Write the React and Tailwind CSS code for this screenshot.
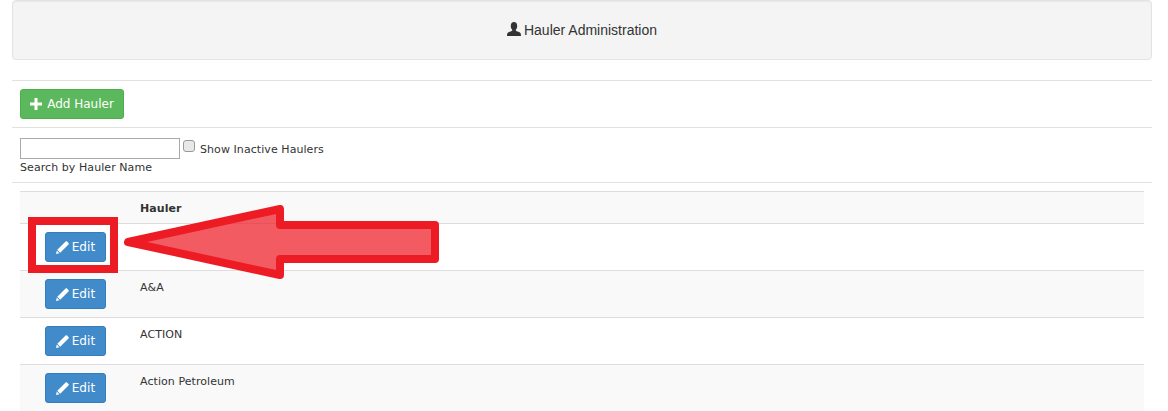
const verdana = "font-['DejaVu_Sans',Verdana,sans-serif]";

const UserIcon = () => (
  <svg viewBox="0 0 14 14" className="w-[14px] h-[14px] -translate-y-[1px] fill-[#333]">
    <path d="M3.800 4C3.800 1.500 5 0 7 0s3.200 1.500 3.200 4c0 1.600-.6 3-1.400 3.800v1c.6.500 2.200.800 3.700 1.500.9.500 1.500 1.200 1.500 3.700H0c0-2.500.6-3.200 1.500-3.700C3 9.600 4.600 9.300 5.200 8.800v-1C4.400 7 3.800 5.600 3.800 4z" />
  </svg>
);

const PlusIcon = () => (
  <svg viewBox="0 0 12 12" className="w-3 h-3 fill-white">
    <path d="M4.500 0h3v4.500H12v3H7.500V12h-3V7.500H0v-3h4.500z" />
  </svg>
);

const PencilIcon = () => (
  <svg viewBox="0 0 13 13" className="w-[13px] h-[13px] fill-white">
    <path d="M9.600.5c.4-.4 1-.4 1.400 0l1.500 1.500c.4.400.4 1 0 1.400L4.200 11.700 1.300 8.800zM.8 9.600l2.600 2.600L0 13z" />
  </svg>
);

const EditButton = () => (
  <button className="w-[61px] h-[30px] flex items-center justify-center gap-[3px] tracking-[0.1px] rounded-[3px] bg-[#428bca] border border-[#357ebd] text-white text-[12px]">
    <PencilIcon />
    Edit
  </button>
);

const Rule = () => <hr className="border-0 border-t border-[#e2e2e2]" />;

const rows = ["", "A&A", "ACTION", "Action Petroleum"];

export default function App() {
  return (
    <div className={`relative h-[411px] overflow-hidden bg-white px-3 pr-4 text-[#333] text-[11px] tracking-[0.07px] ${verdana}`}>
      <div className="h-[60px] flex items-center justify-center gap-[3px] tracking-normal rounded border border-[#e3e3e3] bg-[#f4f4f4] shadow-[inset_0_1px_1px_rgba(0,0,0,0.05)] text-[14px] font-['Liberation_Sans',Arial,sans-serif]">
        <UserIcon />
        Hauler Administration
      </div>

      <div className="mt-5">
        <Rule />
      </div>
      <div className="h-[46px] flex items-center pl-2">
        <button className="w-[104px] h-[30px] flex items-center justify-center gap-[5px] tracking-normal rounded-[3px] bg-[#5cb85c] border border-[#4cae4c] text-white text-[12px] font-medium">
          <PlusIcon />
          Add Hauler
        </button>
      </div>
      <Rule />

      <div className="h-[54px] pl-2 pt-[10px]">
        <div className="flex items-start h-[21px]">
          <input type="text" className="w-[160px] h-[21px] border border-[#a9a9a9] bg-white" />
          <input type="checkbox" className="appearance-none ml-[3px] mt-[2px] w-[12px] h-[12px] rounded-[3px] border border-[#999] bg-[#e8e8e8]" />
          <span className="ml-[5px] mt-[5px] leading-[14px]">Show Inactive Haulers</span>
        </div>
        <div className="mt-[1px] leading-[15px]">Search by Hauler Name</div>
      </div>
      <Rule />

      <table className="mt-2 ml-2 w-[1124px] table-fixed border-collapse">
        <thead>
          <tr className="h-[32px] bg-[#f9f9f9] border-y border-[#ddd]">
            <th className="w-[120px]"></th>
            <th className="text-left font-bold px-0 pt-[3px]">Hauler</th>
          </tr>
        </thead>
        <tbody>
          {rows.map((name, i) => (
            <tr key={i} className={`h-[47px] border-b border-[#ddd] ${i % 2 ? "bg-[#f9f9f9]" : "bg-white"}`}>
              <td className="pl-[25px] py-2 align-top">
                <EditButton />
              </td>
              <td className="pt-[9px] align-top">{name}</td>
            </tr>
          ))}
        </tbody>
      </table>

      {/* red annotation drawn over the table */}
      <div className="absolute left-[28px] top-[217px] w-[90px] h-[56px] border-8 border-[#ed1c24]"></div>
      <svg className="absolute left-0 top-0 w-[1168px] h-[411px] pointer-events-none" viewBox="0 0 1168 411">
        <path
          d="M128 242 L280 209 L280 225 L435 225 L435 259 L280 259 L280 275 Z"
          fill="#ed1c24"
          fillOpacity="0.72"
          stroke="#ed1c24"
          strokeWidth="8"
          strokeLinejoin="round"
        />
      </svg>
    </div>
  );
}
